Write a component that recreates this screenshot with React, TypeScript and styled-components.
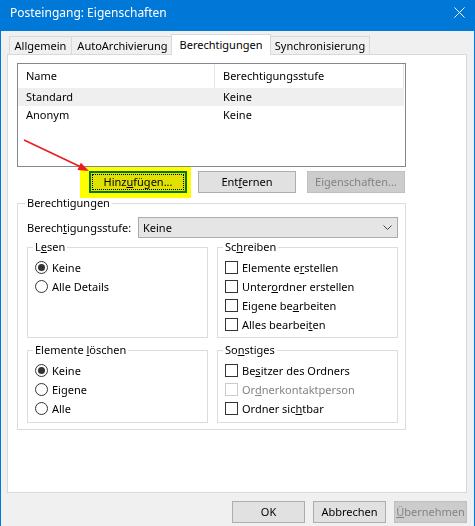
import styled, { createGlobalStyle, css } from "styled-components";

const GlobalStyle = createGlobalStyle`
  html, body {
    margin: 0;
    padding: 0;
    background: #f0f0f0;
  }
  body {
    font-family: "Noto Sans", "Segoe UI", sans-serif;
    font-size: 11px;
    color: #000;
  }
  * {
    box-sizing: border-box;
  }
`;

const Window = styled.div`
  width: 475px;
  height: 526px;
  display: flex;
  flex-direction: column;
  background: #f0f0f0;
  border-left: 1px solid #0078d7;
  border-right: 1px solid #0078d7;
  overflow: hidden;
`;

const TitleBar = styled.div`
  height: 31px;
  flex: none;
  display: flex;
  justify-content: space-between;
  align-items: flex-start;
  padding: 5px 9px 0 9px;
  background: #0078d7;
  color: #fff;
  font-size: 12px;
  line-height: 16px;
`;

const CloseIcon = styled.svg`
  width: 11px;
  height: 11px;
  margin-top: 2px;
`;

const Body = styled.div`
  flex: 1;
  display: flex;
  flex-direction: column;
  padding: 3px 7px 0 6px;
  min-height: 0;
`;

const TabStrip = styled.div`
  height: 20px;
  flex: none;
  display: flex;
  align-items: flex-end;
  padding-left: 2px;
`;

const Tab = styled.div<{ $width: number; $active?: boolean }>`
  width: ${(p) => p.$width}px;
  height: 18px;
  margin-right: -1px;
  border: 1px solid #d9d9d9;
  border-bottom: none;
  background: #f0f0f0;
  line-height: 17px;
  text-align: center;
  white-space: nowrap;
  ${(p) =>
    p.$active &&
    css`
      position: relative;
      z-index: 1;
      height: 21px;
      margin: 0 -1px -1px -2px;
      background: #fff;
      line-height: 19px;
    `}
`;

const Panel = styled.div`
  position: relative;
  height: 439px;
  flex: none;
  background: #fff;
  border: 1px solid #d9d9d9;
  padding: 8px 0 0 9px;
`;

const Column = styled.div`
  width: 389px;
  display: flex;
  flex-direction: column;
`;

const ListBox = styled.div`
  height: 104px;
  border: 1px solid #828790;
  background: #fff;
`;

const ListRow = styled.div<{ $header?: boolean; $shaded?: boolean }>`
  display: grid;
  grid-template-columns: 197px 189px;
  height: ${(p) => (p.$header ? "24px" : "18px")};
  line-height: ${(p) => (p.$header ? "24px" : "18px")};
  background: ${(p) => (p.$shaded ? "#efefef" : "transparent")};
  width: ${(p) => (p.$shaded ? "386px" : "auto")};
`;

const ListCell = styled.div<{ $header?: boolean }>`
  padding-left: 8px;
  white-space: nowrap;
  ${(p) =>
    p.$header &&
    css`
      border-right: 1px solid #e5e5e5;
    `}
`;

const ButtonRow = styled.div`
  display: flex;
  justify-content: flex-end;
  gap: 11px;
  margin-top: 4px;
  padding-right: 1px;
`;

const Button = styled.button<{ $width: number; $primary?: boolean }>`
  width: ${(p) => p.$width}px;
  height: 22px;
  padding: 0;
  font-family: inherit;
  font-size: 11px;
  color: #000;
  background: #e1e1e1;
  border: 1px solid #adadad;
  border-radius: 0;
  line-height: 18px;
  &:disabled {
    background: #cccccc;
    border-color: #bfbfbf;
    color: #838383;
  }
  ${(p) =>
    p.$primary &&
    css`
      border: 2px solid #0078d7;
      outline: 1px dotted #000;
      outline-offset: -4px;
    `}
`;

const Marked = styled.span`
  position: relative;
  display: inline-flex;
`;

const Highlight = styled.span`
  position: absolute;
  top: -4px;
  left: -9px;
  right: -4px;
  bottom: -5px;
  background: #ffff00;
  mix-blend-mode: multiply;
  pointer-events: none;
`;

const Group = styled.fieldset<{ $padBottom?: number }>`
  margin: 0;
  min-width: 0;
  border: 1px solid #dcdcdc;
  padding: 3px 6px ${(p) => p.$padBottom ?? 3}px 7px;
`;

const Legend = styled.legend`
  padding: 0 2px;
  margin-left: -2px;
  line-height: 16px;
`;

const OuterGroup = styled(Group)`
  margin-top: 2px;
  padding: 6px 7px 6px 9px;
`;

const LevelRow = styled.div`
  display: grid;
  grid-template-columns: 111px 1fr;
  align-items: center;
  height: 21px;
`;

const Select = styled.div`
  height: 21px;
  display: flex;
  align-items: center;
  justify-content: space-between;
  padding: 0 5px 0 4px;
  background: #e5e5e5;
  border: 1px solid #adadad;
`;

const GroupGrid = styled.div`
  display: grid;
  grid-template-columns: 181px 181px;
  column-gap: 9px;
  row-gap: 4px;
  margin-top: 1px;
`;

const Option = styled.label<{ $disabled?: boolean }>`
  display: flex;
  align-items: center;
  gap: 4px;
  height: 19px;
  white-space: nowrap;
  color: ${(p) => (p.$disabled ? "#838383" : "#000")};
`;

const Radio = styled.span<{ $checked?: boolean }>`
  width: 13px;
  height: 13px;
  flex: none;
  border: 1px solid #333;
  border-radius: 50%;
  background: #fff;
  display: flex;
  align-items: center;
  justify-content: center;
  &::after {
    content: "";
    width: 7px;
    height: 7px;
    border-radius: 50%;
    background: ${(p) => (p.$checked ? "#333" : "transparent")};
  }
`;

const Check = styled.span<{ $disabled?: boolean }>`
  width: 13px;
  height: 13px;
  flex: none;
  border: 1px solid ${(p) => (p.$disabled ? "#cccccc" : "#333")};
  background: #fff;
`;

const Arrow = styled.svg`
  position: absolute;
  left: 10px;
  top: 80px;
  width: 80px;
  height: 40px;
  overflow: visible;
`;

const Footer = styled.div`
  flex: 1;
  display: flex;
  justify-content: flex-end;
  gap: 8px;
  padding-top: 8px;
`;

function Key({ children }: { children: string }) {
  return <u>{children}</u>;
}

const tabs = [
  { label: "Allgemein", width: 63 },
  { label: "AutoArchivierung", width: 103 },
  { label: "Berechtigungen", width: 100, active: true },
  { label: "Synchronisierung", width: 100 },
];

const rows = [
  { name: "Standard", level: "Keine", shaded: true },
  { name: "Anonym", level: "Keine", shaded: false },
];

export default function App() {
  return (
    <>
      <GlobalStyle />
      <Window>
        <TitleBar>
          <span>Posteingang: Eigenschaften</span>
          <CloseIcon viewBox="0 0 11 11">
            <path d="M0.5 0.5 L10.5 10.5 M10.5 0.5 L0.5 10.5" stroke="#fff" strokeWidth="1" fill="none" />
          </CloseIcon>
        </TitleBar>
        <Body>
          <TabStrip>
            {tabs.map((t) => (
              <Tab key={t.label} $width={t.width} $active={t.active}>
                {t.label}
              </Tab>
            ))}
          </TabStrip>
          <Panel>
            <Column>
              <ListBox>
                <ListRow $header>
                  <ListCell $header>Name</ListCell>
                  <ListCell $header>Berechtigungsstufe</ListCell>
                </ListRow>
                {rows.map((r) => (
                  <ListRow key={r.name} $shaded={r.shaded}>
                    <ListCell>{r.name}</ListCell>
                    <ListCell>{r.level}</ListCell>
                  </ListRow>
                ))}
              </ListBox>
              <ButtonRow>
                <Marked>
                  <Button $width={98} $primary>
                    Hinz<Key>u</Key>fügen...
                  </Button>
                  <Highlight />
                </Marked>
                <Button $width={98}>
                  Ent<Key>f</Key>ernen
                </Button>
                <Button $width={98} disabled>
                  Ei<Key>g</Key>enschaften...
                </Button>
              </ButtonRow>
              <OuterGroup>
                <Legend>Berechtigungen</Legend>
                <LevelRow>
                  <span>
                    Berech<Key>t</Key>igungsstufe:
                  </span>
                  <Select>
                    <span>Keine</span>
                    <svg width="9" height="5" viewBox="0 0 9 5">
                      <path d="M0.5 0.5 L4.5 4.5 L8.5 0.5" stroke="#444" strokeWidth="1" fill="none" />
                    </svg>
                  </Select>
                </LevelRow>
                <GroupGrid>
                  <Group>
                    <Legend>
                      L<Key>e</Key>sen
                    </Legend>
                    <Option>
                      <Radio $checked />
                      Keine
                    </Option>
                    <Option>
                      <Radio />
                      Alle Details
                    </Option>
                  </Group>
                  <Group>
                    <Legend>
                      Sc<Key>h</Key>reiben
                    </Legend>
                    <Option>
                      <Check />
                      <span>
                        Elemente e<Key>r</Key>stellen
                      </span>
                    </Option>
                    <Option>
                      <Check />
                      <span>
                        Unter<Key>o</Key>rdner erstellen
                      </span>
                    </Option>
                    <Option>
                      <Check />
                      <span>
                        Eigene be<Key>a</Key>rbeiten
                      </span>
                    </Option>
                    <Option>
                      <Check />
                      <span>
                        Alles bearbei<Key>t</Key>en
                      </span>
                    </Option>
                  </Group>
                  <Group $padBottom={4}>
                    <Legend>
                      Elemente <Key>l</Key>öschen
                    </Legend>
                    <Option>
                      <Radio $checked />
                      Keine
                    </Option>
                    <Option>
                      <Radio />
                      Eigene
                    </Option>
                    <Option>
                      <Radio />
                      Alle
                    </Option>
                  </Group>
                  <Group $padBottom={4}>
                    <Legend>
                      So<Key>n</Key>stiges
                    </Legend>
                    <Option>
                      <Check />
                      <span>
                        Be<Key>s</Key>itzer des Ordners
                      </span>
                    </Option>
                    <Option $disabled>
                      <Check $disabled />
                      <span>
                        Or<Key>d</Key>nerkontaktperson
                      </span>
                    </Option>
                    <Option>
                      <Check />
                      <span>
                        Ordner sic<Key>h</Key>tbar
                      </span>
                    </Option>
                  </Group>
                </GroupGrid>
              </OuterGroup>
            </Column>
            <Arrow viewBox="0 0 80 40">
              <line x1="6" y1="5" x2="62" y2="31.5" stroke="#e81e1e" strokeWidth="1.6" />
              <polygon points="71,36 59.4,34.9 62.8,27.7" fill="#e81e1e" />
            </Arrow>
          </Panel>
          <Footer>
            <Button $width={73}>OK</Button>
            <Button $width={73}>Abbrechen</Button>
            <Button $width={73} disabled>
              <Key>Ü</Key>bernehmen
            </Button>
          </Footer>
        </Body>
      </Window>
    </>
  );
}
